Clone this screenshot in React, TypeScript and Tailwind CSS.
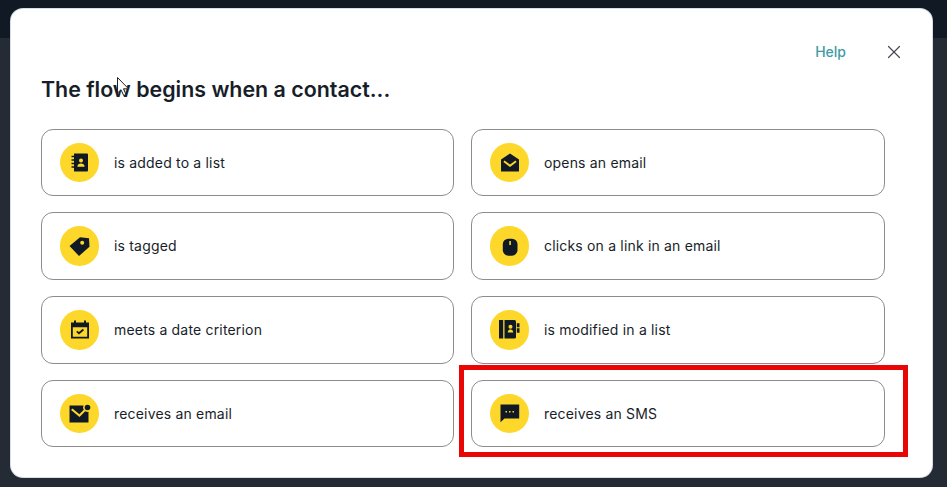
import type { ReactNode } from 'react'
import { X } from 'lucide-react'

const INK = '#111a24'

function BookIcon() {
  return (
    <svg width="20" height="20" viewBox="0 0 20 20">
      <path fill={INK} fillRule="evenodd" d="M4 0.500h13a1 1 0 0 1 1 1v16a1 1 0 0 1-1 1H4zM11 5.500a2 2 0 1 0 0 4 2 2 0 0 0 0-4zM7.400 13.800h7.200c0-2-1.600-3.200-3.600-3.200s-3.600 1.200-3.600 3.200z" />
      <path stroke={INK} strokeWidth="1.400" d="M1.500 3.500h3M1.500 7h3M1.500 10.500h3M1.500 14h3" />
    </svg>
  )
}

function TagIcon() {
  return (
    <svg width="21" height="21" viewBox="0 0 21 21">
      <path fill={INK} fillRule="evenodd" d="M0.500 10 11 1.300 20 2.300 20.500 10.700 10 20zM13.200 4.700a2 2 0 1 0 0 4 2 2 0 0 0 0-4z" />
    </svg>
  )
}

function CalendarIcon() {
  return (
    <svg width="20" height="20" viewBox="0 0 20 20">
      <path fill={INK} fillRule="evenodd" d="M1 2.500h3V0.500h2v2h8V0.500h2v2h3v16H1zM2.800 7.300V16.700h14.400V7.300z" />
      <path fill="none" stroke={INK} strokeWidth="1.800" d="M6.800 11.300 9 13.300 13.400 9.500" />
    </svg>
  )
}

function MailDotIcon() {
  return (
    <svg width="24" height="24" viewBox="0 0 24 24">
      <path fill={INK} fillRule="evenodd" d="M1.500 3.500H15.500A4.500 4.500 0 0 0 20.500 9.800V20.500H1.500zM3.100 7.900 11.500 14.900 17.200 9.200 15.800 7.800 11.400 12.200 4.400 6.400z" />
      <circle cx="19.500" cy="5.500" r="2.800" fill={INK} />
    </svg>
  )
}

function OpenMailIcon() {
  return (
    <svg width="20" height="20" viewBox="0 0 20 20">
      <path fill={INK} fillRule="evenodd" d="M10 0.500 19 6.500V18.500H1V6.500zM4.500 7.600 10 11.600 15.500 7.600 16.600 9.100 10 14 3.400 9.100z" />
    </svg>
  )
}

function MouseIcon() {
  return (
    <svg width="16" height="20" viewBox="0 0 16 20">
      <rect x="0.800" y="2.700" width="14.700" height="17" rx="5.500" fill={INK} />
      <rect x="7.300" y="5" width="1.600" height="4" fill="#fdd82b" />
    </svg>
  )
}

function ContactBookIcon() {
  return (
    <svg width="21" height="20" viewBox="0 0 21 20">
      <path fill={INK} d="M0 0h4.200v18.500H0z" />
      <path fill={INK} fillRule="evenodd" d="M5.500 0H15.500A1.500 1.500 0 0 1 17 1.500V17A1.500 1.500 0 0 1 15.500 18.500H5.500zM11.500 4.700a2 2 0 1 0 0 4 2 2 0 0 0 0-4zM8.800 12.500h5.400c0-1.800-1.200-3-2.700-3s-2.700 1.200-2.700 3z" />
      <path fill={INK} d="M17.800 3.300h2.700v4h-2.700zM17.800 8.300h2.700v4.400h-2.700z" />
    </svg>
  )
}

function SmsIcon() {
  return (
    <svg width="20" height="20" viewBox="0 0 20 20">
      <path fill={INK} fillRule="evenodd" d="M0.500 0.500H19.200V14.500H4.500L0.500 18.200zM5.500 7v1.500H7V7zM9 7v1.500h1.500V7zM12.500 7v1.500H14V7z" />
    </svg>
  )
}

function Option({ icon, label, tall }: { icon: ReactNode; label: string; tall?: boolean }) {
  return (
    <button className="flex items-center rounded-[12px] border border-[#8c8c8c] bg-white pl-[18px] text-left">
      <span className={tall ? 'flex h-[40px] w-[39px] shrink-0 items-center justify-center rounded-full bg-[#fdd82b]' : 'flex h-[39px] w-[39px] shrink-0 items-center justify-center rounded-full bg-[#fdd82b]'}>
        {icon}
      </span>
      <span className={tall ? 'mb-[1px] ml-[15px] text-[14px] font-normal tracking-[0.18px] text-[#171e29]' : 'ml-[15px] text-[14px] font-normal tracking-[0.18px] text-[#171e29]'}>
        {label}
      </span>
    </button>
  )
}

export default function App() {
  return (
    <div className="relative h-[487px] w-[947px] overflow-hidden bg-[#242b34] font-['Inter',sans-serif]">
      <div className="h-[38px] bg-[#111a24]" />

      <div className="absolute left-[11px] top-[9px] h-[468px] w-[921px] rounded-[12px] bg-white px-[30px] shadow-[0_0_0_1px_#d5dde8]">
        <div className="flex h-[61px] items-end justify-end pb-[8px]">
          <a className="text-[14px] font-medium text-[#3f9ca5]">Help</a>
          <button className="mb-[-1px] ml-[37px] mr-[-3px] text-[#444b54]">
            <X size={22} strokeWidth={1.300} />
          </button>
        </div>
        <h2 className="mt-[5px] text-[21.400px] font-semibold leading-[28px] text-[#171e29]">The flow begins when a contact...</h2>
        <div className="mt-[26px] grid w-[844px] grid-cols-[413px_414px] grid-rows-[67px_68px_68px_67px] gap-x-[17px] gap-y-[16px]">
          <Option icon={<BookIcon />} label="is added to a list" />
          <Option icon={<OpenMailIcon />} label="opens an email" />
          <Option tall icon={<TagIcon />} label="is tagged" />
          <Option tall icon={<MouseIcon />} label="clicks on a link in an email" />
          <Option tall icon={<CalendarIcon />} label="meets a date criterion" />
          <Option tall icon={<ContactBookIcon />} label="is modified in a list" />
          <Option icon={<MailDotIcon />} label="receives an email" />
          <Option icon={<SmsIcon />} label="receives an SMS" />
        </div>
      </div>

      {/* annotation drawn over the screenshot */}
      <div className="absolute left-[459px] top-[365px] h-[92px] w-[449px] border-[5px] border-[#e90606]" />

      {/* mouse pointer */}
      <svg className="absolute left-[117px] top-[77px]" width="13" height="20" viewBox="0 0 13 20">
        <path d="M0.500 0.500V16L4 12.700 6.700 18.500 9 17.500 6.500 11.800H11.500z" fill="white" stroke="#222" strokeWidth="1" />
      </svg>
    </div>
  )
}
